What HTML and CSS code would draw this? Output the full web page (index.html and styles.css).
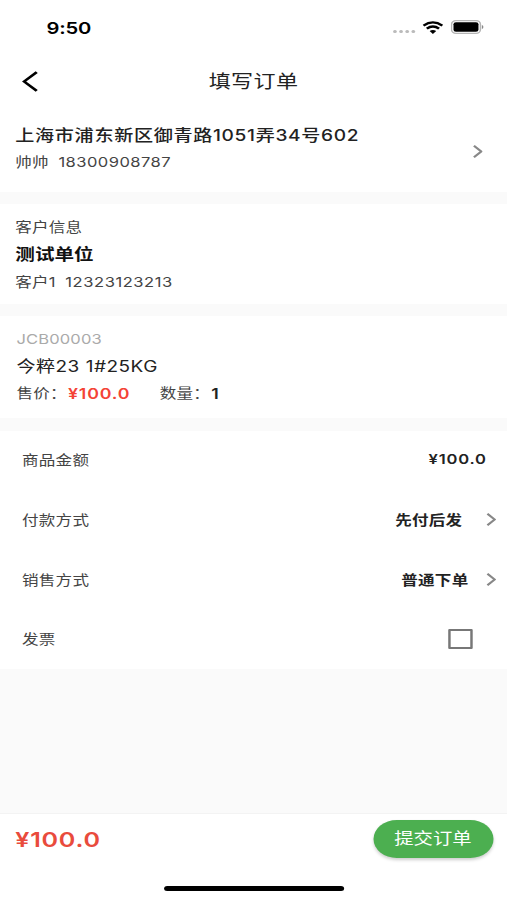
FILE: index.html
```html
<!DOCTYPE html>
<html lang="zh-CN">
<head>
<meta charset="utf-8">
<title>填写订单</title>
<link rel="stylesheet" href="styles.css">
</head>
<body>
<div class="screen">
  <header class="status">
    <span class="time">9:50</span>
    <div class="indicators">
      <div class="dots"><i></i><i></i><i></i><i></i></div>
      <svg class="wifi" viewBox="0 0 17 13" preserveAspectRatio="none"><g fill="none" stroke="#000" stroke-width="2.2"><path d="M.8 4.6Q8.500-1.800 16.200 4.600"/><path d="M3.500 7.600Q8.500 3.400 13.500 7.600"/></g><path d="M5.800 10.100Q8.500 8 11.200 10.100L8.500 13z"/></svg>
      <svg class="battery" viewBox="0 0 27 14" preserveAspectRatio="none"><rect x=".7" y=".7" width="23.600" height="12.600" rx="3.600" fill="#fff" stroke="#b5b5b5" stroke-width="1.200"/><rect x="2.300" y="2.300" width="20.400" height="9.400" rx="2"/><path d="M25.500 5v4q1.300-.7 1.300-2t-1.300-2z" fill="#888"/></svg>
    </div>
  </header>
  <nav class="nav">
    <svg class="back" viewBox="0 0 13 22" preserveAspectRatio="none"><path d="M12 1.300 1.700 11 12 20.700" fill="none" stroke="#000" stroke-width="2.500"/></svg>
    <h1 class="title">填写订单</h1>
  </nav>
  <section class="address">
    <div>
      <p class="street">上海市浦东新区御青路1051弄34号602</p>
      <p class="detail">帅帅&nbsp; <span class="phone">18300908787</span></p>
    </div>
    <svg class="chevron" viewBox="0 0 8 13"><path d="M1 .8 7 6.500 1 12.200"/></svg>
  </section>
  <section class="customer">
    <p class="label">客户信息</p>
    <p class="company">测试单位</p>
    <p class="detail">客户1&nbsp; <span class="phone">12323123213</span></p>
  </section>
  <section class="product">
    <p class="code">JCB00003</p>
    <p class="name">今粹23 1#25KG</p>
    <p class="sale"><span>售价：</span><b class="price">¥100.0</b><span class="qty">数量：</span><b>1</b></p>
  </section>
  <section class="options">
    <div class="row"><span>商品金额</span><b class="amount">¥100.0</b></div>
    <div class="row"><span>付款方式</span><b class="payment">先付后发</b><svg class="chevron" viewBox="0 0 8 13"><path d="M1 .8 7 6.500 1 12.200"/></svg></div>
    <div class="row"><span>销售方式</span><b class="method">普通下单</b><svg class="chevron" viewBox="0 0 8 13"><path d="M1 .8 7 6.500 1 12.200"/></svg></div>
    <div class="row"><span>发票</span><i class="checkbox"></i></div>
  </section>
  <footer class="footer">
    <div class="bar"><span class="total">¥100.0</span><button class="submit">提交订单</button></div>
    <div class="home"></div>
  </footer>
</div>
</body>
</html>
```
FILE: styles.css
```css
* { box-sizing: border-box; margin: 0; padding: 0; }
html, body { width: 507px; height: 900px; overflow: hidden; background: #fff; }
/* 414px logical width stretched to the window width */
.screen {
  width: 414px; height: 900px;
  display: flex; flex-direction: column;
  transform: scaleX(1.22464); transform-origin: 0 0;
  background: #fafafa; color: #222;
  font-family: Inter, "Noto Sans CJK SC", sans-serif;
  font-size: 13.500px;
}
p, span, b { white-space: nowrap; }
.status { height: 50px; background: #fff; display: flex; justify-content: space-between; align-items: center; padding: 5px 19.200px 0 38px; }
.time { font-size: 16.500px; font-weight: 600; color: #000; letter-spacing: -.15px; }
.indicators { display: flex; align-items: center; margin-top: -1px; }
.dots { display: flex; gap: 2px; margin: 9px 6px 0 0; }
.dots i { width: 3px; height: 3.500px; border-radius: 50%; background: #bbb; }
.wifi { width: 17px; height: 13px; margin-right: 6px; }
.battery { width: 27px; height: 14px; }
.nav { height: 62px; background: #fff; display: grid; grid-template-columns: 60px 1fr 60px; align-items: center; }
.back { width: 13px; height: 21px; margin-left: 17.500px; }
.title { font-size: 18px; font-weight: 400; letter-spacing: .3px; text-align: center; line-height: 26px; padding-top: 1px; }
.address { height: 80px; background: #fff; padding: 10px 20.300px 0 12.500px; display: flex; justify-content: space-between; }
.street { font-size: 15.600px; font-weight: 500; line-height: 27px; letter-spacing: .55px; }
.detail { font-size: 13.500px; line-height: 27px; color: #444; letter-spacing: .15px; }
.phone { letter-spacing: .37px; }
.chevron { width: 8px; height: 13px; fill: none; stroke: #888; stroke-width: 1.900; flex: none; }
.address .chevron { margin-top: 23px; }
.customer { height: 100px; margin-top: 12px; padding: 10px 12.500px; background: #fff; }
.label { line-height: 27px; color: #444; letter-spacing: .15px; }
.company { font-size: 16px; font-weight: 700; line-height: 27px; color: #111; }
.customer .detail { line-height: 28px; }
.customer .phone { letter-spacing: .45px; }
.product { height: 102px; margin-top: 12px; padding: 10px 13.500px; background: #fff; }
.code { line-height: 27px; color: #aaa; letter-spacing: .1px; }
.name { font-size: 15.500px; line-height: 27px; letter-spacing: .42px; }
.sale { display: flex; line-height: 27px; color: #444; letter-spacing: .15px; }
.sale b { color: #222; font-size: 14.500px; font-weight: 600; margin-left: 1px; }
.sale .price { color: #f44336; width: 75px; letter-spacing: .7px; }
.options { height: 238px; margin-top: 13px; background: #fff; }
.row { height: 59.700px; display: flex; align-items: center; padding: 0 9px 3px 18px; color: #444; letter-spacing: .2px; }
.row > :nth-child(2) { margin-left: auto; }
.row b { font-weight: 700; color: #222; }
.row .amount { margin-right: 7.500px; padding-bottom: 1px; font-weight: 600; letter-spacing: .65px; }
.payment { margin-right: 19.500px; }
.method { margin-right: 14.500px; }
.row .chevron, .checkbox { position: relative; top: .5px; }
.checkbox { width: 20px; height: 20px; border: 2px solid #777; border-radius: 1px; margin-right: 19px; }
.footer { height: 87px; margin-top: auto; background: #fff; border-top: 1px solid #f3f3f3; }
.bar { height: 50px; display: flex; justify-content: space-between; align-items: center; padding: 0 11.500px 0 12.500px; }
.total { font-size: 20.500px; font-weight: 600; color: #e94b3c; letter-spacing: .6px; padding-top: 1px; }
.submit { width: 98px; height: 38px; margin-top: -1px; padding-bottom: 2px; border: 0; border-radius: 19px; background: #4caf50; color: #fff; font: 400 15.800px Inter, "Noto Sans CJK SC", sans-serif; box-shadow: 0 2px 3px #0003; }
.home { width: 147px; height: 5px; border-radius: 3px; background: #000; margin: 22px auto 0; }
```
